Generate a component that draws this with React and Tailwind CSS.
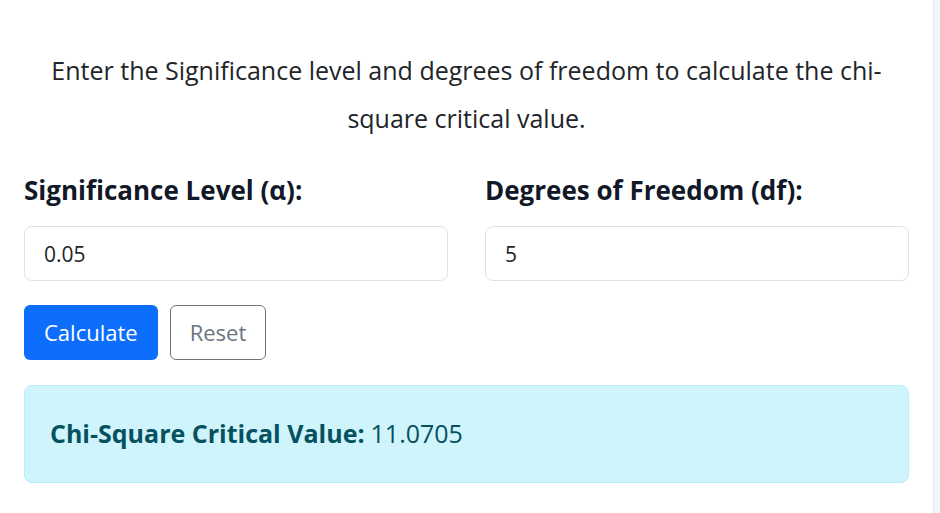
import React, { useState } from 'react'

const App = () => {
  const [alpha, setAlpha] = useState('0.05')
  const [df, setDf] = useState('5')
  const [result, setResult] = useState('11.0705')

  const reset = () => {
    setAlpha('')
    setDf('')
    setResult(null)
  }

  return (
    <div className="flex min-h-screen bg-white font-['Open_Sans','Liberation_Sans',sans-serif] text-[#212529]">
      <div className="w-[933px] px-6">
        <p className="mt-[46px] text-center text-[25px] leading-[48px]">
          Enter the Significance level and degrees of freedom to calculate the chi-square critical value.
        </p>

        <div className="mt-[30px] grid grid-cols-2 gap-x-[37px]">
          <div>
            <label className="block text-[26px] font-bold leading-[36px] text-[#111827]">Significance Level (α):</label>
            <input
              value={alpha}
              onChange={(e) => setAlpha(e.target.value)}
              className="mt-[18px] h-[55px] w-full rounded-lg border border-[#dee2e6] px-[19px] text-[21px] text-[#212529] outline-none"
            />
          </div>
          <div>
            <label className="block text-[26px] font-bold leading-[36px] text-[#111827]">Degrees of Freedom (df):</label>
            <input
              value={df}
              onChange={(e) => setDf(e.target.value)}
              className="mt-[18px] h-[55px] w-full rounded-lg border border-[#dee2e6] px-[19px] text-[21px] text-[#212529] outline-none"
            />
          </div>
        </div>

        <div className="mt-[24px] flex gap-3">
          <button className="h-[55px] rounded-md bg-[#0d6efd] px-[20px] text-[22px] text-white">Calculate</button>
          <button onClick={reset} className="h-[55px] rounded-md border border-[#6c757d] bg-white px-[19px] text-[22px] text-[#6c757d]">Reset</button>
        </div>

        {result && (
          <div className="mt-[25px] flex h-[98px] items-center rounded-lg border border-[#b6effb] bg-[#cff4fc] px-[25px] text-[25px] text-[#055160]">
            <span className="font-bold">Chi-Square Critical Value:</span>
            <span className="ml-[6px]">{result}</span>
          </div>
        )}
      </div>
      <div className="flex-1 border-l border-[#e6e7e9] bg-[#f4f5f6]" />
    </div>
  )
}

export default App
